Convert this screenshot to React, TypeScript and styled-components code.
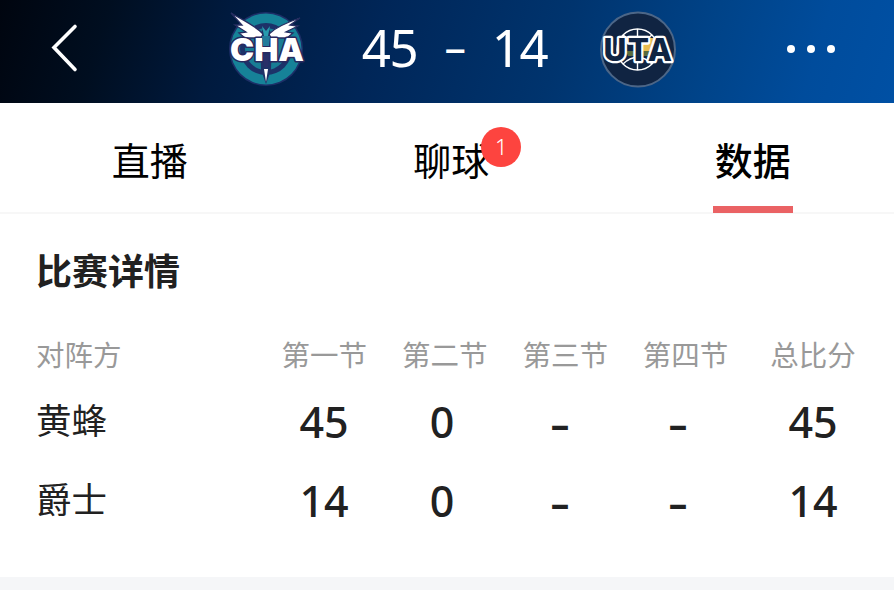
import styled, { createGlobalStyle } from "styled-components";

const GlobalStyle = createGlobalStyle`
  * {
    box-sizing: border-box;
  }
  body {
    margin: 0;
    background-color: #fff;
    font-family: "Noto Sans", "Noto Sans CJK SC", sans-serif;
    color: #212121;
  }
`;

const Container = styled.div`
  width: 894px;
  height: 590px;
  overflow: hidden;
  display: flex;
  flex-direction: column;
  background-color: #fff;
`;

const Header = styled.header`
  height: 103px;
  flex-shrink: 0;
  padding-bottom: 6px;
  display: grid;
  grid-template-columns: 225px 80px 293px 80px 1fr;
  align-items: center;
  background: linear-gradient(
    107deg,
    #00050f 0%,
    #000e20 12%,
    #001a3e 25%,
    #002658 42%,
    #00346e 62%,
    #004388 78%,
    #004c9c 90%,
    #0050a4 100%
  );
`;

const BackBtn = styled.button`
  display: flex;
  width: 40px;
  margin-left: 44px;
  padding: 0;
  border: none;
  background: none;
`;

const Logo = styled.svg`
  display: block;
  width: 80px;
  height: 80px;
`;

const Score = styled.div`
  display: grid;
  grid-template-columns: repeat(3, 65px);
  padding: 0 0 4px 52px;
  color: #fff;
  font-size: 51px;
  line-height: 80px;
  letter-spacing: -1.5px;
  text-align: center;
`;

const Dash = styled.span<{ $size: number; $weight?: number }>`
  font-size: ${(props) => props.$size}px;
  font-weight: ${(props) => props.$weight ?? 400};
`;

const MoreBtn = styled.button`
  display: flex;
  gap: 12px;
  margin-left: 109px;
  padding: 0;
  border: none;
  background: none;
`;

const Dot = styled.span`
  width: 8px;
  height: 8px;
  border-radius: 50%;
  background-color: #fff;
`;

const Tabs = styled.nav`
  height: 111px;
  flex-shrink: 0;
  display: grid;
  grid-template-columns: repeat(3, 301.5px);
  justify-content: start;
  margin-left: -1px;
  border-bottom: 2px solid #f7f7f7;
`;

const Tab = styled.div<{ $active?: boolean }>`
  display: flex;
  justify-content: center;
  height: 111px;
  padding-top: 26px;
  color: #000;
  font-family: "Noto Sans CJK SC", sans-serif;
  font-size: 38px;
  line-height: 59px;
  font-weight: ${(props) => (props.$active ? 500 : 400)};
`;

const TabLabel = styled.span<{ $active?: boolean }>`
  position: relative;
  height: 84px;
  padding: 0 2px;
  border-bottom: ${(props) => (props.$active ? "7px solid #ea6264" : "none")};
`;

const Badge = styled.span`
  position: absolute;
  top: -2px;
  left: 70px;
  width: 40px;
  height: 40px;
  border-radius: 50%;
  background-color: #fd443f;
  color: #fff;
  font-family: "Noto Sans", sans-serif;
  font-size: 22px;
  font-weight: 300;
  line-height: 38px;
  text-align: center;
`;

const Details = styled.main`
  height: 363px;
  flex-shrink: 0;
  padding: 27px 0 0 36px;
`;

const Title = styled.h2`
  margin: 0 0 30px;
  font-family: "Noto Sans CJK SC", sans-serif;
  font-size: 36px;
  font-weight: 700;
  line-height: 56px;
`;

const HeadRow = styled.div`
  display: grid;
  grid-template-columns: 228px 120.5px 120.5px 120.5px 120px 135px;
  height: 53px;
  color: #999;
  font-family: "Noto Sans CJK SC", sans-serif;
  font-size: 28.5px;
  line-height: 54px;
`;

const HeadCell = styled.span`
  white-space: nowrap;
  text-align: center;

  &:first-child {
    text-align: left;
  }
`;

const Row = styled.div`
  display: grid;
  grid-template-columns: 229px 118px 118px 118px 118px 152px;
  height: 78.5px;
`;

const Team = styled.span`
  font-family: "Noto Sans CJK SC", sans-serif;
  font-size: 35.5px;
  line-height: 78px;
`;

const Points = styled.span`
  padding-top: 3px;
  font-size: 43px;
  font-weight: 500;
  line-height: 78px;
  text-align: center;
`;

const Divider = styled.div`
  flex: 1;
  background-color: #f5f6f8;
`;

const periods = ["第一节", "第二节", "第三节", "第四节", "总比分"];

const teams = [
  { name: "黄蜂", points: ["45", "0", "–", "–", "45"] },
  { name: "爵士", points: ["14", "0", "–", "–", "14"] },
];

function HornetsLogo() {
  return (
    <Logo viewBox="0 0 80 80">
      <circle cx="41" cy="40" r="37" fill="#1d2f68" />
      <circle cx="41" cy="40" r="35.5" fill="#168298" />
      <circle cx="41" cy="40" r="26" fill="#1c3269" />
      <circle cx="41" cy="40" r="21" fill="#187d95" />
      <path d="M35 26L41 14L47 26L46 61L41 75L36 61Z" fill="#203267" />
      <path
        d="M6 4C16 10 31 17 38 25L36 29H20L14 24L21 23L10 16L17 16Z"
        fill="#fff"
        stroke="#252c60"
        strokeWidth="1.3"
      />
      <path
        d="M75 9C63 13 51 18 44 25L46 29H62L68 24L61 23L73 17L65 16Z"
        fill="#fff"
        stroke="#252c60"
        strokeWidth="1.3"
      />
      <path d="M37 17L41 22L45 17L43 27H39Z" fill="#279bad" />
      <text
        x="5"
        y="52"
        textLength="74"
        lengthAdjust="spacingAndGlyphs"
        fill="#fff"
        stroke="#29295f"
        strokeWidth="3"
        strokeLinejoin="round"
        paintOrder="stroke"
        fontFamily="Inter, sans-serif"
        fontSize="32"
        fontWeight="900"
      >
        CHA
      </text>
      <path d="M37 27H45L44 37H38Z" fill="#237c9b" />
      <path d="M38 46H44L43 58H39Z" fill="#292f68" />
      <path d="M39 60H43L41 73Z" fill="#fff" />
    </Logo>
  );
}

function JazzLogo() {
  return (
    <Logo viewBox="0 0 80 80">
      <circle cx="40" cy="40.5" r="37" fill="#102442" stroke="#4c6687" strokeWidth="2" />
      <path d="M39 29H56V42H39Z" fill="#e9bd51" />
      <path d="M28 42H57L54 47H30Z" fill="#596b3d" />
      <g fill="none" stroke="#fff" strokeWidth="1.4">
        <circle cx="39.5" cy="40.5" r="20.5" />
        <path d="M39.5 20V61M25 26C34 34 45 34 54 26M25 55C34 46 45 46 54 55" />
      </g>
      <text
        x="5.5"
        y="59.5"
        dy="-8"
        textLength="70"
        lengthAdjust="spacingAndGlyphs"
        fill="#102442"
        stroke="#fff"
        strokeWidth="4.6"
        strokeLinejoin="round"
        paintOrder="stroke"
        fontFamily="Inter, sans-serif"
        fontSize="31"
        fontWeight="800"
        letterSpacing="1.5"
      >
        UTA
      </text>
    </Logo>
  );
}

function App() {
  return (
    <>
      <GlobalStyle />
      <Container>
        <Header>
          <BackBtn>
            <svg width="40" height="60" viewBox="0 0 40 60">
              <path
                d="M31 7.5L10 28.5L31 50.5"
                fill="none"
                stroke="#fff"
                strokeWidth="3.6"
                strokeLinecap="round"
              />
            </svg>
          </BackBtn>
          <HornetsLogo />
          <Score>
            <span>45</span>
            <Dash $size={43}>–</Dash>
            <span>14</span>
          </Score>
          <JazzLogo />
          <MoreBtn>
            <Dot />
            <Dot />
            <Dot />
          </MoreBtn>
        </Header>
        <Tabs>
          <Tab>
            <TabLabel>直播</TabLabel>
          </Tab>
          <Tab>
            <TabLabel>
              聊球<Badge>1</Badge>
            </TabLabel>
          </Tab>
          <Tab $active>
            <TabLabel $active>数据</TabLabel>
          </Tab>
        </Tabs>
        <Details>
          <Title>比赛详情</Title>
          <HeadRow>
            <HeadCell>对阵方</HeadCell>
            {periods.map((period) => (
              <HeadCell key={period}>{period}</HeadCell>
            ))}
          </HeadRow>
          {teams.map((team) => (
            <Row key={team.name}>
              <Team>{team.name}</Team>
              {team.points.map((point, index) => (
                <Points key={index}>
                  {point === "–" ? (
                    <Dash $size={37} $weight={700}>
                      {point}
                    </Dash>
                  ) : (
                    point
                  )}
                </Points>
              ))}
            </Row>
          ))}
        </Details>
        <Divider />
      </Container>
    </>
  );
}

export default App;
